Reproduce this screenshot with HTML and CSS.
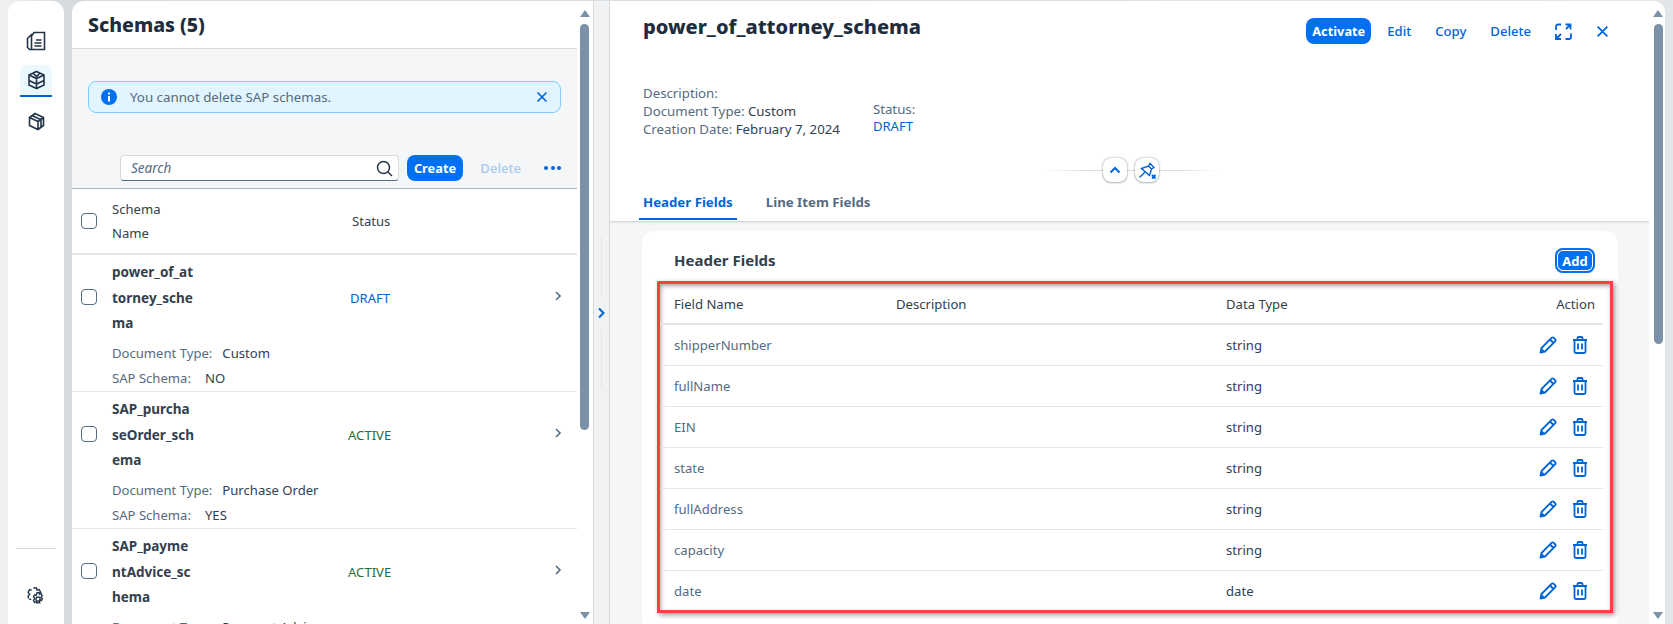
FILE: index.html
```html
<!DOCTYPE html>
<html lang="en">
<head>
<meta charset="utf-8">
<title>Schemas</title>
<link rel="stylesheet" href="styles.css">
</head>
<body>
<svg class="defs" width="0" height="0">
  <symbol id="pen" viewBox="0 0 18 18"><path d="M1.500 16.500l1-4.500L12.800 1.700a1.200 1.200 0 0 1 1.700 0l1.800 1.800a1.200 1.200 0 0 1 0 1.700L6 15.500z M11 3.500l3.500 3.500" fill="none" stroke="currentColor" stroke-width="1.800" stroke-linejoin="round"/><path d="M1.500 16.500l1-4.500 3.500 3.500z" fill="currentColor"/></symbol>
  <symbol id="trash" viewBox="0 0 16 18"><path d="M1 4h14M5.500 4V2a1 1 0 0 1 1-1h3a1 1 0 0 1 1 1v2M2.500 4v11.500A1.500 1.500 0 0 0 4 17h8a1.500 1.500 0 0 0 1.500-1.500V4M6 7.500v6M10 7.500v6" fill="none" stroke="currentColor" stroke-width="1.800"/></symbol>
  <symbol id="chev" viewBox="0 0 8 12"><path d="M2 2l4 4-4 4" fill="none" stroke="currentColor" stroke-width="1.600"/></symbol>
</svg>

<nav class="side">
  <div class="side-top">
    <a class="nav-item">
      <svg width="20" height="20" viewBox="0 0 20 20" fill="none" stroke="#223548" stroke-width="1.600"><path d="M8 1.500h10.500v17H5.500V5z M5.500 18.500H3.500L1.500 16.500V7.500L6 3M10 9h5.500M8.500 12h7M8.500 15h7"/></svg>
    </a>
    <a class="nav-item active">
      <svg width="19" height="20" viewBox="0 0 18 20" fill="none" stroke="#223548" stroke-width="1.600"><path d="M9 1.500l7.500 3.500v10L9 18.500 1.500 15V5z M1.500 5L9 8.500 16.500 5M1.500 10.500L9 14l7.500-3.500M9 8.500v10M6 3.500l3 3 3-3"/></svg>
    </a>
    <a class="nav-item">
      <svg width="17" height="19" viewBox="0 0 17 19" fill="none" stroke="#223548" stroke-width="1.600"><path d="M7 1.500l8.500 4v8L10 17.500 1.500 13.500v-8z M1.500 5.500l8.500 4v8M4.500 3.800l8.500 4v8M10 9.500l5.500-4"/></svg>
    </a>
  </div>
  <div class="side-bottom">
    <svg width="18" height="19" viewBox="0 0 17 18" fill="none" stroke="#223548" stroke-width="1.300"><path d="M6 1h3l.5 2 2-.5 1.500 2.500-1.500 1.500M1.500 11L1 8.500 2.500 7 1 5l1.500-2.500 2 .5M2 12l2-.5"/><circle cx="10.500" cy="11.500" r="2"/><path d="M9.500 5.500h2l.4 1.500 1.500-.5 1 1.800-1 1.200.1.500 1 1.200-1 1.800-1.500-.5-.4 1.500.4 1h-3l-.4-1-1.500.5-1-1.800 1-1.200v-1l-1-1.200 1-1.800 1.500.5z"/></svg>
  </div>
</nav>

<section class="list-wrap">
  <div class="list">
    <header class="list-head"><h1>Schemas (5)</h1></header>
    <div class="list-tools">
      <div class="strip">
        <svg width="16" height="16" viewBox="0 0 16 16"><circle cx="8" cy="8" r="8" fill="#0070f2"/><rect x="7" y="7" width="2" height="5.500" fill="#fff"/><rect x="7" y="3.500" width="2" height="2" fill="#fff"/></svg>
        <span class="strip-text">You cannot delete SAP schemas.</span>
        <svg class="strip-x" width="12" height="12" viewBox="0 0 12 12"><path d="M1.500 1.500l9 9M10.500 1.500l-9 9" stroke="#0064d9" stroke-width="1.600"/></svg>
      </div>
      <div class="bar">
        <div class="search">
          <span>Search</span>
          <svg width="17" height="17" viewBox="0 0 17 17" fill="none" stroke="#223548" stroke-width="1.500"><circle cx="7.500" cy="7.500" r="6"/><path d="M12 12l4 4"/></svg>
        </div>
        <button class="btn">Create</button>
        <span class="link off">Delete</span>
        <span class="dots"><i></i><i></i><i></i></span>
      </div>
    </div>
    <div class="thead">
      <span class="check"></span>
      <span class="th-name">Schema<br>Name</span>
      <span class="th-status">Status</span>
    </div>
    <div class="row">
      <span class="check"></span>
      <div class="row-main">
        <div class="row-name">power_of_at<br>torney_sche<br>ma</div>
        <div class="attr">Document Type:<b>Custom</b></div>
        <div class="attr sap">SAP Schema:<b>NO</b></div>
      </div>
      <span class="st draft">DRAFT</span>
      <svg class="nav-chev" width="8" height="12"><use href="#chev"/></svg>
    </div>
    <div class="row">
      <span class="check"></span>
      <div class="row-main">
        <div class="row-name">SAP_purcha<br>seOrder_sch<br>ema</div>
        <div class="attr">Document Type:<b>Purchase Order</b></div>
        <div class="attr sap">SAP Schema:<b>YES</b></div>
      </div>
      <span class="st active">ACTIVE</span>
      <svg class="nav-chev" width="8" height="12"><use href="#chev"/></svg>
    </div>
    <div class="row">
      <span class="check"></span>
      <div class="row-main">
        <div class="row-name">SAP_payme<br>ntAdvice_sc<br>hema</div>
        <div class="attr">Document Type:<b>Payment Advice</b></div>
        <div class="attr sap">SAP Schema:<b>YES</b></div>
      </div>
      <span class="st active">ACTIVE</span>
      <svg class="nav-chev" width="8" height="12"><use href="#chev"/></svg>
    </div>
  </div>
  <div class="sbar">
    <span class="arr up"></span>
    <span class="thumb list-thumb"></span>
    <span class="arr down"></span>
  </div>
</section>

<div class="gutter">
  <span class="g-line"></span>
  <svg width="9" height="12" viewBox="0 0 8 12"><path d="M1.500 1.500L6 6l-4.500 4.500" fill="none" stroke="#0064d9" stroke-width="2"/></svg>
  <span class="g-line"></span>
</div>

<main class="detail">
  <div class="detail-body">
    <header class="dh">
      <div class="dh-top">
        <h2>power_of_attorney_schema</h2>
        <div class="dh-actions">
          <button class="btn">Activate</button>
          <span class="link">Edit</span>
          <span class="link">Copy</span>
          <span class="link">Delete</span>
          <svg class="ico-full" width="17" height="17" viewBox="0 0 17 17" fill="none" stroke="#0064d9" stroke-width="1.800"><path d="M10.500 1.500h5v5M15.500 1.500L11 6M1 11v5h5M1.500 15.500L6 11M1 7V3.500A2 2 0 0 1 3 1.500h3M16 10.500V14a2 2 0 0 1-2 2h-3.500"/></svg>
          <svg class="ico-x" width="13" height="13" viewBox="0 0 12 12"><path d="M1.500 1.500l9 9M10.500 1.500l-9 9" stroke="#0064d9" stroke-width="1.600"/></svg>
        </div>
      </div>
      <div class="dh-info">
        <div class="info-col">
          <div>Description:</div>
          <div>Document Type: <em>Custom</em></div>
          <div>Creation Date: <em>February 7, 2024</em></div>
        </div>
        <div class="info-col status-col">
          <div>Status:</div>
          <div class="st draft">DRAFT</div>
        </div>
      </div>
      <div class="expander">
        <button class="round"><svg width="12" height="8" viewBox="0 0 12 8"><path d="M1.500 6.500L6 2l4.500 4.500" fill="none" stroke="#0064d9" stroke-width="2"/></svg></button>
        <button class="round"><svg width="20" height="20" viewBox="0 0 20 20" fill="none" stroke="#0064d9" stroke-width="1.400"><path d="M4.500 8.500L11.500 6l3 3-2 6.500z M11.500 6L13 3.500l4 4-2.500 1.500M8 12l-5.500 5.500"/><path d="M15 15l3.500 3.500M18.500 15L15 18.500" stroke-width="1.800"/></svg></button>
      </div>
      <div class="tabs">
        <span class="tab on">Header Fields</span>
        <span class="tab">Line Item Fields</span>
      </div>
    </header>
    <div class="content">
      <div class="card">
        <div class="card-head">
          <h3>Header Fields</h3>
          <button class="btn btn-add">Add</button>
        </div>
        <div class="marked">
          <table>
            <thead>
              <tr><th class="c1">Field Name</th><th class="c2">Description</th><th class="c3">Data Type</th><th class="c4">Action</th></tr>
            </thead>
            <tbody>
              <tr><td>shipperNumber</td><td></td><td class="dark">string</td><td class="c4"><svg width="18" height="18"><use href="#pen"/></svg><svg width="16" height="18"><use href="#trash"/></svg></td></tr>
              <tr><td>fullName</td><td></td><td class="dark">string</td><td class="c4"><svg width="18" height="18"><use href="#pen"/></svg><svg width="16" height="18"><use href="#trash"/></svg></td></tr>
              <tr><td>EIN</td><td></td><td class="dark">string</td><td class="c4"><svg width="18" height="18"><use href="#pen"/></svg><svg width="16" height="18"><use href="#trash"/></svg></td></tr>
              <tr><td>state</td><td></td><td class="dark">string</td><td class="c4"><svg width="18" height="18"><use href="#pen"/></svg><svg width="16" height="18"><use href="#trash"/></svg></td></tr>
              <tr><td>fullAddress</td><td></td><td class="dark">string</td><td class="c4"><svg width="18" height="18"><use href="#pen"/></svg><svg width="16" height="18"><use href="#trash"/></svg></td></tr>
              <tr><td>capacity</td><td></td><td class="dark">string</td><td class="c4"><svg width="18" height="18"><use href="#pen"/></svg><svg width="16" height="18"><use href="#trash"/></svg></td></tr>
              <tr><td>date</td><td></td><td class="dark">date</td><td class="c4"><svg width="18" height="18"><use href="#pen"/></svg><svg width="16" height="18"><use href="#trash"/></svg></td></tr>
            </tbody>
          </table>
        </div>
      </div>
    </div>
  </div>
  <div class="sbar">
    <span class="arr up"></span>
    <span class="thumb detail-thumb"></span>
    <span class="arr down"></span>
  </div>
</main>
</body>
</html>
```

FILE: styles.css
```css
* {
    box-sizing: border-box;
}

html, body {
    height: 100%;
}

body {
    margin: 0;
    display: flex;
    height: 624px;
    overflow: hidden;
    padding: 1px 8px 0;
    background: linear-gradient(90deg, #eef0f2 0, #eef0f2 8px, #d6dadd 64px, #d6dadd 72px, #e3e6e9 100%);
    font: 14px "Noto Sans", "Open Sans", sans-serif;
    color: #32363a;
}

.defs {
    position: absolute;
}

button {
    font-family: inherit;
    border: 0;
    cursor: pointer;
}

/* side navigation */
.side {
    width: 56px;
    margin-right: 8px;
    flex: none;
    background: #fff;
    border-radius: 12px 12px 0 0;
    display: flex;
    flex-direction: column;
    justify-content: space-between;
}

.side-top {
    padding-top: 24px;
    display: flex;
    flex-direction: column;
    align-items: center;
    gap: 8px;
}

.nav-item {
    width: 32px;
    height: 32px;
    display: flex;
    align-items: center;
    justify-content: center;
    border-radius: 8px 8px 0 0;
}

.nav-item.active {
    background: #ebf8ff;
    border-bottom: 2px solid #0064d9;
}

.side-bottom {
    margin: 0 8px;
    height: 76px;
    border-top: 1px solid #d9d9d9;
    display: flex;
    align-items: center;
    justify-content: center;
    padding-top: 20px;
}

/* schema list */
.list-wrap {
    width: 521px;
    flex: none;
    display: flex;
    background: #fff;
    border-radius: 12px 0 0 0;
    overflow: hidden;
}

.list {
    width: 505px;
    flex: none;
}

.list-head {
    height: 48px;
    padding-left: 16px;
    display: flex;
    align-items: center;
    border-bottom: 1px solid #d9d9d9;
    box-shadow: 0 1px 2px rgba(34, 53, 72, .08);
}

.list-head h1 {
    margin: 0;
    font-size: 19.500px;
    font-weight: 800;
    color: #1d2d3e;
}

.list-tools {
    height: 140px;
    padding: 32px 16px 0;
    background: #f5f6f7;
    border-bottom: 1px solid #a9b4be;
}

.strip {
    height: 32px;
    display: flex;
    align-items: center;
    gap: 13px;
    padding: 0 12px;
    background: #e1f4ff;
    border: 1px solid #7bcfff;
    border-radius: 8px;
    font-size: 13.300px;
    color: #556b82;
}

.strip-x {
    margin-left: auto;
}

.bar {
    margin-top: 42px;
    padding-left: 32px;
    display: flex;
    align-items: center;
    height: 26px;
}

.search {
    width: 285px;
    height: 26px;
    background: #fff;
    border: 1px solid #d5dadd;
    border-bottom-color: #556b81;
    border-radius: 4px;
    padding: 0 5px 0 10px;
    display: flex;
    align-items: center;
    justify-content: space-between;
    font-size: 13.500px;
    font-style: italic;
    color: #556b82;
}

.btn {
    height: 26px;
    padding: 0 8px;
    background: #0070f2;
    color: #fff;
    font-size: 12.800px;
    font-weight: 700;
    border-radius: 8px;
}

.bar .btn {
    margin-left: 8px;
    width: 58px;
    padding: 0;
}

.link {
    color: #0064d9;
    font-size: 13.100px;
    font-weight: 500;
}

.link.off {
    margin-left: 17px;
    color: #a7c9f0;
}

.dots {
    margin-left: 23px;
    display: flex;
    gap: 2.500px;
}

.dots i {
    width: 4px;
    height: 4px;
    border-radius: 50%;
    background: #0064d9;
}

.thead {
    height: 66px;
    display: flex;
    align-items: center;
    padding-left: 9px;
    border-bottom: 2px solid #e5e5e5;
    font-size: 13.100px;
    color: #32404f;
    line-height: 24px;
}

.check {
    width: 16px;
    height: 16px;
    flex: none;
    background: #fff;
    border: 1px solid #556b82;
    border-radius: 4px;
}

.th-name {
    margin-left: 15px;
    width: 240px;
}

.row {
    height: 137px;
    display: flex;
    padding-left: 9px;
    padding-top: 5px;
    border-bottom: 1px solid #e5e5e5;
    font-size: 13.100px;
    position: relative;
}

.row .check {
    margin-top: 29px;
}

.row-main {
    margin-left: 15px;
    width: 238px;
}

.row-name {
    color: #32404f;
    font-size: 13.500px;
    font-weight: 700;
    line-height: 25.700px;
    width: 100px;
    margin-bottom: 4px;
    white-space: nowrap;
}

.attr {
    line-height: 25px;
    color: #556b82;
    white-space: nowrap;
}

.attr b {
    margin-left: 10px;
    font-weight: 400;
    color: #32404f;
}

.attr.sap b {
    margin-left: 14px;
}

.st {
    font-size: 13.100px;
    line-height: 20px;
}

.row .st {
    margin-top: 28px;
}

.row .active {
    margin-left: -2px;
}

.draft {
    color: #0064d9;
}

.active {
    color: #256f3a;
}

.nav-chev {
    position: absolute;
    right: 15px;
    top: 35px;
    color: #556b82;
}

/* fake scrollbars */
.sbar {
    width: 16px;
    flex: none;
    background: #fff;
    position: relative;
}

.arr {
    width: 0;
    height: 0;
    border-left: 5px solid transparent;
    border-right: 5px solid transparent;
    position: absolute;
    left: 3px;
}

.arr.up {
    top: 9px;
    border-bottom: 7px solid #7b91a8;
}

.arr.down {
    bottom: 5px;
    border-top: 7px solid #7b91a8;
}

.thumb {
    width: 9px;
    background: #7b91a8;
    border-radius: 5px;
    position: absolute;
    left: 3px;
    top: 23px;
}

.list-thumb {
    height: 406px;
}

.detail-thumb {
    height: 320px;
    left: 5px;
}

.detail .arr {
    left: 4px;
}

/* gutter between panes */
.gutter {
    width: 17px;
    flex: none;
    display: flex;
    flex-direction: column;
    align-items: center;
    justify-content: center;
    gap: 10px;
    background: #f1f2f4;
    border-right: 1px solid #d9d9d9;
    border-left: 1px solid #d9d9d9;
}

.g-line {
    width: 1px;
    height: 60px;
    background: #e5e5e5;
}

/* detail pane */
.detail {
    flex: 1;
    display: flex;
    background: #fff;
    border-radius: 0 12px 0 0;
    overflow: hidden;
    min-width: 0;
}

.detail-body {
    flex: 1;
    min-width: 0;
}

.dh {
    height: 221px;
    padding: 0 0 0 33px;
    border-bottom: 1px solid #d9d9d9;
}

.dh-top {
    display: flex;
    justify-content: space-between;
    height: 72px;
    padding-top: 17px;
    padding-right: 40px;
}

.dh h2 {
    margin: -5px 0 0;
    font-size: 20px;
    font-weight: 800;
    color: #1d2d3e;
}

.dh-actions {
    display: flex;
    align-items: flex-start;
}

.dh-actions .btn {
    width: 65px;
    padding: 0;
}

.dh-actions .link {
    line-height: 26px;
    margin-left: 16px;
}

.dh-actions .link + .link {
    margin-left: 24px;
}

.ico-full {
    margin: 5px 0 0 24px;
}

.ico-x {
    margin: 7px 0 0 24px;
}

.dh-info {
    display: flex;
    align-items: flex-end;
    gap: 33px;
    font-size: 13.250px;
    line-height: 18px;
    color: #556b82;
    padding-top: 11px;
}

.dh-info em {
    font-style: normal;
    color: #32404f;
}

.status-col {
    padding-bottom: 3px;
}

.status-col .st {
    line-height: 17px;
}

.expander {
    margin: 20px 0 0 -33px;
    height: 24px;
    width: 1042px;
    display: flex;
    justify-content: center;
    gap: 8px;
    background: linear-gradient(90deg, transparent 430px, #d9dde1 480px, #d9dde1 570px, transparent 610px) 0 50% / 100% 1px no-repeat;
}

.round {
    width: 24px;
    height: 24px;
    padding: 0;
    background: #fff;
    border-radius: 8px;
    box-shadow: 0 0 2px rgba(34, 53, 72, .5), 0 1px 2px rgba(34, 53, 72, .25);
    display: flex;
    align-items: center;
    justify-content: center;
}

.tabs {
    display: flex;
    gap: 25px;
    margin: 7px 0 0 -4px;
}

.tab {
    padding: 0 4px;
    height: 31px;
    line-height: 26px;
    font-size: 13.250px;
    font-weight: 700;
    color: #556b82;
}

.tab.on {
    color: #0064d9;
    border-bottom: 2px solid #0064d9;
}

.content {
    padding: 9px 32px 0;
    background: #f5f6f7;
    height: 403px;
    box-shadow: inset 0 2px 2px -1px rgba(34, 53, 72, .08);
}

.card {
    width: 976px;
    height: 400px;
    background: #fff;
    border-radius: 12px;
    padding: 0 5px 0 15px;
}

.card-head {
    height: 50px;
    display: flex;
    align-items: flex-start;
    justify-content: space-between;
    padding: 17px 18px 0 17px;
}

.card-head h3 {
    margin: 0;
    font-size: 15px;
    line-height: 24px;
    font-weight: 700;
    color: #32404f;
}

.btn-add {
    width: 40px;
    height: 25px;
    padding: 0;
    font-size: 13px;
    border-radius: 8px;
    box-shadow: inset 0 0 0 2px #0070f2, inset 0 0 0 3px #fff;
}

.marked {
    width: 956px;
    height: 332px;
    border: 3px solid #ff4040;
    box-shadow: 2px 2px 5px rgba(0, 0, 0, .4), inset 1px 2px 4px rgba(0, 0, 0, .35);
    padding-right: 7px;
}

table {
    width: 100%;
    border-collapse: collapse;
    table-layout: fixed;
    font-size: 13.100px;
}

th {
    height: 40px;
    font-weight: 400;
    text-align: left;
    color: #32404f;
    border-bottom: 2px solid #e5e5e5;
    padding: 0 0 0 14px;
}

td {
    height: 41px;
    padding: 0 0 0 14px;
    color: #556b82;
    border-bottom: 1px solid #e5e5e5;
}

tr:last-child td {
    border-bottom: 0;
}

.c1 {
    width: 222px;
}

.c2 {
    width: 330px;
}

.c3 {
    width: 180px;
}

th.c4 {
    text-align: right;
    padding-right: 8px;
}

td.c4 {
    text-align: right;
    padding-right: 15px;
    color: #0064d9;
}

td.c4 svg {
    vertical-align: middle;
    margin-left: 15px;
}

.dark {
    color: #32404f;
}
```
